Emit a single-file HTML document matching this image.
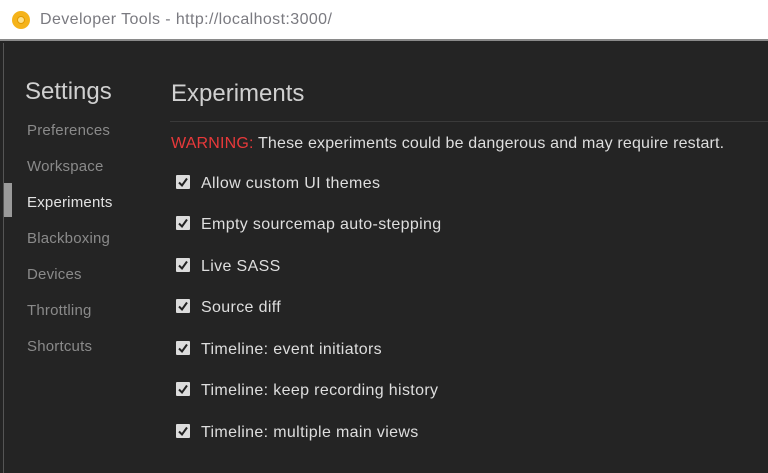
<!DOCTYPE html>
<html><head><style>
*{margin:0;padding:0;box-sizing:border-box}
body{width:768px;height:473px;overflow:hidden;background:#242424;font-family:"Liberation Sans",sans-serif;position:relative}
.title{position:absolute;left:0;top:0;width:768px;height:41px;background:#fff;border-bottom:2px solid #8a8a8a}
.title .t{position:absolute;left:40px;top:11px;font-size:16px;letter-spacing:0.4px;color:#7a7a80}
.ico{position:absolute;left:12px;top:11px;width:18px;height:18px;border-radius:50%;background:#f5b31a}
.ico:after{content:"";position:absolute;left:5px;top:5px;width:8px;height:8px;border-radius:50%;background:#fde08a;border:1px solid #e09a00;box-sizing:border-box}
.lb{position:absolute;left:3px;top:43px;width:1px;height:430px;background:#555}
.a{position:absolute;white-space:nowrap}
.nav{left:27px;font-size:15px;letter-spacing:0.2px;color:#8a8a8a}
.h{font-size:24px;color:#d0d0d0}
.sep{position:absolute;left:170px;top:121px;width:598px;height:1px;background:#3a3a3a}
.sel{position:absolute;left:4px;top:183px;width:8px;height:34px;background:#9a9a9a}
.cb{position:absolute;left:176px;width:14px;height:14px;background:#dcdcdc;border-radius:1px}
.cb svg{position:absolute;left:1px;top:1px}
.lab{left:201px;font-size:16px;letter-spacing:0.35px;color:#dedede}
</style></head><body>
<div class="title"><div class="ico"></div><div class="t">Developer Tools - http://localhost:3000/</div></div>
<div class="lb"></div>
<div class="a h" style="left:25px;top:78px">Settings</div>
<div class="a h" style="left:171px;top:80px">Experiments</div>
<div class="sep"></div>
<div class="sel"></div>
<div class="a nav" style="top:122px">Preferences</div>
<div class="a nav" style="top:158px">Workspace</div>
<div class="a nav" style="top:194px;color:#e2e2e2">Experiments</div>
<div class="a nav" style="top:230px">Blackboxing</div>
<div class="a nav" style="top:266px">Devices</div>
<div class="a nav" style="top:302px">Throttling</div>
<div class="a nav" style="top:338px">Shortcuts</div>
<div class="a" style="left:171px;top:135px;font-size:16px;letter-spacing:0.18px;color:#dedede"><span style="color:#e8393a">WARNING:</span> These experiments could be dangerous and may require restart.</div>
<div class="cb" style="top:175px"><svg width="12" height="12"><path d="M2 6.5L5 9.5L10 2.5" stroke="#222" stroke-width="2" fill="none"/></svg></div><div class="a lab" style="top:175px">Allow custom UI themes</div>
<div class="cb" style="top:216px"><svg width="12" height="12"><path d="M2 6.5L5 9.5L10 2.5" stroke="#222" stroke-width="2" fill="none"/></svg></div><div class="a lab" style="top:216px">Empty sourcemap auto-stepping</div>
<div class="cb" style="top:258px"><svg width="12" height="12"><path d="M2 6.5L5 9.5L10 2.5" stroke="#222" stroke-width="2" fill="none"/></svg></div><div class="a lab" style="top:258px">Live SASS</div>
<div class="cb" style="top:299px"><svg width="12" height="12"><path d="M2 6.5L5 9.5L10 2.5" stroke="#222" stroke-width="2" fill="none"/></svg></div><div class="a lab" style="top:299px">Source diff</div>
<div class="cb" style="top:341px"><svg width="12" height="12"><path d="M2 6.5L5 9.5L10 2.5" stroke="#222" stroke-width="2" fill="none"/></svg></div><div class="a lab" style="top:341px">Timeline: event initiators</div>
<div class="cb" style="top:382px"><svg width="12" height="12"><path d="M2 6.5L5 9.5L10 2.5" stroke="#222" stroke-width="2" fill="none"/></svg></div><div class="a lab" style="top:382px">Timeline: keep recording history</div>
<div class="cb" style="top:424px"><svg width="12" height="12"><path d="M2 6.5L5 9.5L10 2.5" stroke="#222" stroke-width="2" fill="none"/></svg></div><div class="a lab" style="top:424px">Timeline: multiple main views</div>
</body></html>
